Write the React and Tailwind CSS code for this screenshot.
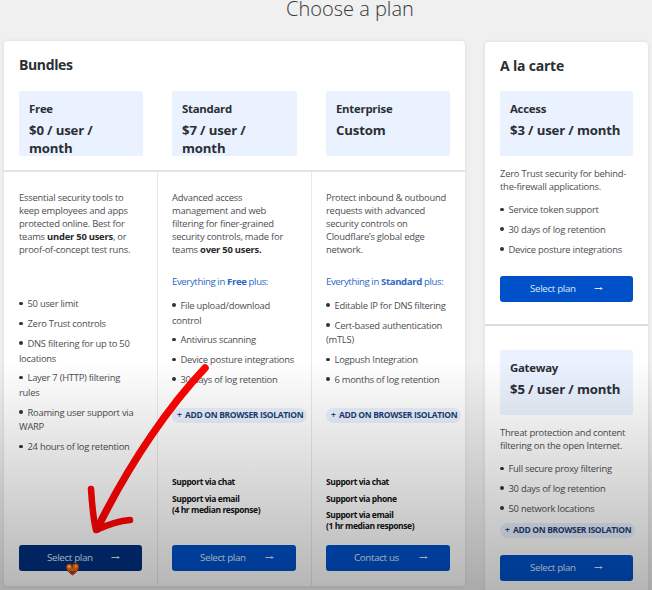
import { clsx } from "clsx";

const bundles = [
  {
    name: "Free",
    price: ["$0 / user /", "month"],
    description: [
      "Essential security tools to",
      "keep employees and apps",
      "protected online. Best for",
      <>
        teams <b className="text-[#26282b]">under 50 users</b>, or
      </>,
      "proof-of-concept test runs.",
    ],
    features: [
      ["50 user limit"],
      ["Zero Trust controls"],
      ["DNS filtering for up to 50", "locations"],
      ["Layer 7 (HTTP) filtering", "rules"],
      ["Roaming user support via", "WARP"],
      ["24 hours of log retention"],
    ],
    action: "Select plan",
    active: true,
  },
  {
    name: "Standard",
    price: ["$7 / user /", "month"],
    description: [
      "Advanced access",
      "management and web",
      "filtering for finer-grained",
      "security controls, made for",
      <>
        teams <b className="text-[#26282b]">over 50 users.</b>
      </>,
    ],
    includes: "Free",
    features: [
      ["File upload/download", "control"],
      ["Antivirus scanning"],
      ["Device posture integrations"],
      ["30 days of log retention"],
    ],
    support: [["Support via chat"], ["Support via email", "(4 hr median response)"]],
    action: "Select plan",
  },
  {
    name: "Enterprise",
    price: ["Custom"],
    description: [
      "Protect inbound & outbound",
      "requests with advanced",
      "security controls on",
      "Cloudflare’s global edge",
      "network.",
    ],
    includes: "Standard",
    features: [
      ["Editable IP for DNS filtering"],
      ["Cert-based authentication", "(mTLS)"],
      ["Logpush Integration"],
      ["6 months of log retention"],
    ],
    support: [
      ["Support via chat"],
      ["Support via phone"],
      ["Support via email", "(1 hr median response)"],
    ],
    action: "Contact us",
  },
];

const addons = [
  {
    name: "Access",
    price: ["$3 / user / month"],
    description: ["Zero Trust security for behind-", "the-firewall applications."],
    features: [
      ["Service token support"],
      ["30 days of log retention"],
      ["Device posture integrations"],
    ],
  },
  {
    name: "Gateway",
    price: ["$5 / user / month"],
    description: ["Threat protection and content", "filtering on the open Internet."],
    features: [
      ["Full secure proxy filtering"],
      ["30 days of log retention"],
      ["50 network locations"],
    ],
    isolation: true,
  },
];

function Lines({ lines }) {
  return lines.map((line, i) => (
    <span key={i} className="block">
      {line}
    </span>
  ));
}

function PriceBox({ name, price }) {
  return (
    <div className="h-[65px] rounded-[2px] bg-[#eaf2ff] pl-[10px] pt-[9px] font-bold text-[#2b2e33]">
      <div className="text-[11.4px] leading-[18px] tracking-[-0.26px]">{name}</div>
      <div className="mt-[3px] text-[13.2px] leading-[18.4px] tracking-[-0.15px]">
        <Lines lines={price} />
      </div>
    </div>
  );
}

function Description({ lines }) {
  return (
    <p className="text-[9.4px] leading-[13.1px] tracking-[-0.22px] text-[#4c4e52]">
      <Lines lines={lines} />
    </p>
  );
}

function Features({ items, className }) {
  return (
    <ul
      className={clsx(
        "flex flex-col gap-[5px] text-[9.4px] leading-[14.7px] tracking-[-0.25px] text-[#4c4e52]",
        className
      )}
    >
      {items.map((lines) => (
        <li key={lines[0]}>
          <span className="mr-[5px] inline-block size-[3.5px] rounded-full bg-[#303236] align-[2px]" />
          {lines[0]}
          {lines[1] && <span className="block">{lines[1]}</span>}
        </li>
      ))}
    </ul>
  );
}

function IsolationPill({ className }) {
  return (
    <div
      className={clsx(
        "flex h-[15px] w-[135px] items-center rounded-full bg-[#e9f1fd] pl-[5px] text-[8.5px] font-bold tracking-[-0.34px] text-[#1d3d78]",
        className
      )}
    >
      <span className="mr-[3px] w-[5px] font-semibold">+</span>
      ADD ON BROWSER ISOLATION
    </div>
  );
}

function PlanButton({ label, active, className }) {
  return (
    <button
      className={clsx(
        "relative flex h-[26px] w-full shrink-0 items-center rounded-[3px] text-[9.8px] tracking-[-0.35px] text-[#d9e7fb]",
        active ? "bg-[#003080]" : "bg-[#0051c9]",
        className
      )}
    >
      {label}
      <svg className="ml-auto" width="9" height="6" viewBox="0 0 9 6" fill="none" stroke="currentColor">
        <path d="M0.5 2.5H8.3" />
        <path d="M6.4 1.1L8.6 2.5L6.4 3.9Z" fill="currentColor" stroke="none" />
      </svg>
      {active && <HeartCursor />}
    </button>
  );
}

function HeartCursor() {
  return (
    <svg className="absolute left-[46px] top-[16px]" width="15" height="15" viewBox="0 0 15 15">
      <path d="M7.5 14C4 11.5 1 9 1 5.8C1 2.5 5 1.5 7.2 4.2C8.8 1.3 13.8 1.8 14 5.4C14.1 8.8 10.8 11.8 7.5 14Z" fill="#f06a20" stroke="#702309" strokeWidth="0.8" />
      <path d="M2.4 5.8C3 3.8 5 4 6 5.6L4.6 7.6Z" fill="#ffd27a" />
      <path d="M9.3 5.3C10.2 3.4 12.2 3.6 12.6 5.3L10.4 7.2Z" fill="#ffb04a" />
      <path d="M4 9.6L7.4 13L11.2 9.8L7.5 10.8Z" fill="#94200f" />
      <path d="M6.2 4.2L8.2 3.9L7.4 7.4Z" fill="#b9320f" />
    </svg>
  );
}

function BundleColumn({ plan }) {
  return (
    <div className="flex flex-col border-r border-[#e9e9ea] pb-[15px] pl-[14px] pr-[15px] pt-[18.5px] first:pl-[15px] last:border-r-0">
      <Description lines={plan.description} />
      {plan.includes && (
        <p className="mt-[19px] text-[9.6px] leading-[13px] tracking-[-0.38px] text-[#2b69c4]">
          Everything in <b>{plan.includes}</b> plus:
        </p>
      )}
      <Features items={plan.features} className={plan.includes ? "mt-[11px]" : "mt-[41.5px]"} />
      {plan.includes && <IsolationPill className="mt-[20.5px]" />}
      {plan.support && (
        <div className="mt-[53.5px] flex flex-col gap-[4.8px] text-[8.5px] font-bold leading-[11.3px] tracking-[-0.42px] text-[#111]">
          {plan.support.map((lines) => (
            <div key={lines[0]}>
              <Lines lines={lines} />
            </div>
          ))}
        </div>
      )}
      <PlanButton label={plan.action} active={plan.active} className="mt-auto pl-[28px] pr-[22px]" />
    </div>
  );
}

export default function App() {
  return (
    <div className="relative h-[590px] w-[652px] overflow-hidden whitespace-nowrap bg-[#f0f0f0] font-['Open_Sans','Noto_Sans',sans-serif]">
      <h1 className="h-[41px] pl-[286px] text-[20px] font-light leading-[17px] text-[#35373a]">Choose a plan</h1>

      <div className="flex items-start gap-[20px] pl-[4px]">
        <section className="flex h-[545px] w-[461px] flex-col rounded-[4px] bg-white shadow-[0_0_4px_rgba(0,0,0,0.09)]">
          <header className="h-[131px] border-b-2 border-[#e4e4e5] px-[15px] pt-[14px]">
            <h2 className="text-[14px] font-bold leading-[20px] tracking-[-0.38px] text-[#2b2e33]">Bundles</h2>
            <div className="mt-[16px] grid grid-cols-[124px_125px_124px] gap-[29px]">
              {bundles.map((plan) => (
                <PriceBox key={plan.name} name={plan.name} price={plan.price} />
              ))}
            </div>
          </header>
          <div className="grid flex-1 grid-cols-[154px_154px_153px]">
            {bundles.map((plan) => (
              <BundleColumn key={plan.name} plan={plan} />
            ))}
          </div>
        </section>

        <section className="mt-px h-[560px] w-[163px] rounded-[4px] bg-white shadow-[0_0_4px_rgba(0,0,0,0.09)]">
          <h2 className="px-[15px] pt-[14px] text-[14px] font-bold leading-[20px] tracking-[-0.2px] text-[#2b2e33]">
            A la carte
          </h2>
          {addons.map((plan, i) => (
            <div
              key={plan.name}
              className={clsx("px-[15px]", i === 0 ? "h-[248px] pt-[15px]" : "border-t-2 border-[#dcdcdd] pt-[24px]")}
            >
              <PriceBox name={plan.name} price={plan.price} />
              <div className="mt-[10.5px]">
                <Description lines={plan.description} />
              </div>
              <Features items={plan.features} className="mt-[10.5px]" />
              {plan.isolation && <IsolationPill className="mt-[6.5px]" />}
              <PlanButton
                label="Select plan"
                className={clsx("pl-[30px] pr-[30px]", plan.isolation ? "mt-[17.5px]" : "mt-[19px]")}
              />
            </div>
          ))}
        </section>
      </div>

      {/* shade that darkens the lower part of the frame */}
      <div className="pointer-events-none absolute inset-x-0 bottom-0 h-[230px] bg-linear-to-b from-black/0 to-black/29" />

      {/* hand-drawn arrow pointing at the free plan */}
      <svg
        className="pointer-events-none absolute inset-0"
        width="652"
        height="590"
        fill="none"
        strokeLinecap="round"
        strokeLinejoin="round"
      >
        <defs>
          <linearGradient id="ink" x1="0" y1="365" x2="0" y2="535" gradientUnits="userSpaceOnUse">
            <stop offset="0" stopColor="#fb0505" />
            <stop offset="1" stopColor="#cf0303" />
          </linearGradient>
        </defs>
        <path d="M205 368C172 403 132 458 97 529" stroke="url(#ink)" strokeWidth="7.5" />
        <path d="M91 489C92 504 93 518 96 530C107 525 118 521 130 520" stroke="url(#ink)" strokeWidth="6.5" />
      </svg>
    </div>
  );
}
